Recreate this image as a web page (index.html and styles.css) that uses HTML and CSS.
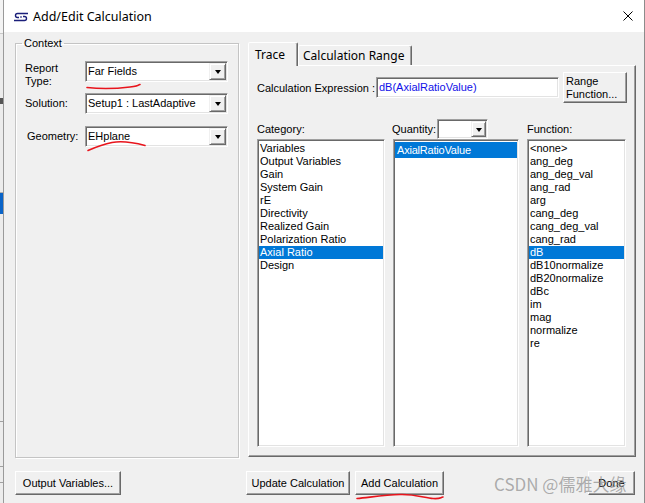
FILE: index.html
```html
<!DOCTYPE html>
<html>
<head>
<meta charset="utf-8">
<link rel="stylesheet" href="styles.css">
</head>
<body>
<div class="desk">
  <div class="strip">
    <div class="s-top"></div>
    <div class="s-a"></div>
    <div class="s-mark"></div>
    <div class="s-b"></div>
    <div class="s-blue"></div>
    <div class="s-c"></div>
    <div class="s-d"></div>
    <div class="s-e"></div>
  </div>
  <div class="window">
    <div class="titlebar">
      <svg class="appicon" width="16" height="10" viewBox="0 0 16 10">
        <path d="M15 1.5H4.5a2 2 0 0 0 0 4H6" fill="none" stroke="#1b1f7a" stroke-width="1.4"/>
        <path d="M1 8.5h10.5a2 2 0 0 0 0-4H10" fill="none" stroke="#1b1f7a" stroke-width="1.4"/>
        <path d="M7.3 5h1.4" stroke="#1b1f7a" stroke-width="1.4"/>
      </svg>
      <span class="title">Add/Edit Calculation</span>
      <svg class="close" width="10" height="10" viewBox="0 0 10 10">
        <path d="M0.5 0.5L9.5 9.5M9.5 0.5L0.5 9.5" stroke="#000" stroke-width="1"/>
      </svg>
    </div>
    <div class="client">
      <div class="columns">
        <fieldset class="group">
          <legend class="legend">Context</legend>
          <div class="frow first">
            <div class="flabel">Report<br>Type:</div>
            <div class="combo"><span class="val">Far Fields</span><span class="ddbtn"><i class="arrow"></i></span></div>
          </div>
          <div class="frow mid">
            <div class="flabel">Solution:</div>
            <div class="combo"><span class="val">Setup1 : LastAdaptive</span><span class="ddbtn"><i class="arrow"></i></span></div>
          </div>
          <div class="frow geo">
            <div class="flabel geolabel">Geometry:</div>
            <div class="combo"><span class="val">EHplane</span><span class="ddbtn"><i class="arrow"></i></span></div>
          </div>
        </fieldset>
        <div class="tabs">
          <div class="tabstrip">
            <div class="tab sel">Trace</div>
            <div class="tab other">Calculation Range</div>
          </div>
          <div class="panel">
            <div class="exprrow">
              <div class="exprlabel">Calculation Expression :</div>
              <div class="exprbox">dB(AxialRatioValue)</div>
              <div class="btn rangebtn">Range<br>Function...</div>
            </div>
            <div class="lists">
              <div class="lbl">Category:</div>
              <div class="lbl qcell"><span class="qlabel">Quantity:</span><div class="combo qcombo"><span class="val"></span><span class="ddbtn small"><i class="arrow"></i></span></div></div>
              <div class="lbl">Function:</div>
              <div class="list">
                <div class="item">Variables</div>
                <div class="item">Output Variables</div>
                <div class="item">Gain</div>
                <div class="item">System Gain</div>
                <div class="item">rE</div>
                <div class="item">Directivity</div>
                <div class="item">Realized Gain</div>
                <div class="item">Polarization Ratio</div>
                <div class="item on">Axial Ratio</div>
                <div class="item">Design</div>
              </div>
              <div class="list">
                <div class="item qitem on">AxialRatioValue</div>
              </div>
              <div class="list">
                <div class="item">&lt;none&gt;</div>
                <div class="item">ang_deg</div>
                <div class="item">ang_deg_val</div>
                <div class="item">ang_rad</div>
                <div class="item">arg</div>
                <div class="item">cang_deg</div>
                <div class="item">cang_deg_val</div>
                <div class="item">cang_rad</div>
                <div class="item on">dB</div>
                <div class="item">dB10normalize</div>
                <div class="item">dB20normalize</div>
                <div class="item">dBc</div>
                <div class="item">im</div>
                <div class="item">mag</div>
                <div class="item">normalize</div>
                <div class="item">re</div>
              </div>
            </div>
          </div>
        </div>
      </div>
      <div class="buttons">
        <div class="btn b-out">Output Variables...</div>
        <div class="btn b-upd">Update Calculation</div>
        <div class="btn b-add">Add Calculation</div>
        <div class="btn b-done">Done</div>
      </div>
    </div>
  </div>
</div>
<svg class="marks" width="645" height="503" viewBox="0 0 645 503">
  <path d="M87 87.5C100 89 118 88.5 130 87S137 85 140 84.5" fill="none" stroke="#e8141c" stroke-width="1.6" stroke-linecap="round"/>
  <path d="M88 150.5C96 147 104 144 112 142.5C120 141 130 141.5 145 145.5" fill="none" stroke="#e8141c" stroke-width="1.6" stroke-linecap="round"/>
  <path d="M357 498.5C372 497 385 495 400 494.5C415 494 425 498 433 498.5S440 497.5 443 497" fill="none" stroke="#e8141c" stroke-width="1.6" stroke-linecap="round"/>
</svg>
<div class="watermark">CSDN @儒雅大缘</div>
</body>
</html>
```
FILE: styles.css
```css
html, body {
  margin: 0;
  padding: 0;
}
body {
  width: 645px;
  height: 503px;
  overflow: hidden;
  position: relative;
  background: #f0f0f0;
  font-family: "Liberation Sans", Arial, sans-serif;
  font-size: 11px;
  color: #000;
}
.desk {
  display: flex;
  height: 503px;
}
.strip {
  width: 3px;
  display: flex;
  flex-direction: column;
  background: #ececec;
}
.s-top { height: 33px; background: #f4f4f4; border-bottom: 1px solid #c8c8c8; }
.s-a { height: 64px; }
.s-mark { height: 6px; background: #555; }
.s-b { height: 88px; border-bottom: 1px solid #b0b0b0; }
.s-blue { height: 21px; background: #0a64c8; }
.s-c { height: 207px; border-bottom: 1px solid #a0a0a0; }
.s-d { height: 44px; border-bottom: 1px solid #a0a0a0; }
.s-e { height: 15px; border-bottom: 1px solid #a0a0a0; }

.window {
  width: 640px;
  border-left: 1px solid #9a9a9a;
  border-right: 1px solid #8c8c8c;
  display: flex;
  flex-direction: column;
}
.titlebar {
  height: 32px;
  flex: none;
  background: #fff;
  display: flex;
  align-items: center;
  padding-left: 9px;
}
.appicon {
  margin-right: 4px;
  margin-top: 1px;
}
.title {
  flex: 1;
  font-family: "Noto Sans", sans-serif;
  font-size: 12.5px;
  color: #000;
}
.close {
  margin-right: 11px;
}
.client {
  flex: 1;
  background: #f0f0f0;
  padding: 5px 7px 0 11px;
}
.columns {
  display: grid;
  grid-template-columns: 224px 388px;
  column-gap: 9px;
  align-items: start;
}

/* Context group */
.group {
  margin: 0;
  box-sizing: border-box;
  height: 421px;
  border: 1px solid #c4c4c4;
  box-shadow: inset 1px 1px #fff, 1px 1px #fff;
  padding: 11px 0 0 9px;
  min-width: 0;
}
.legend {
  padding: 0 2px;
  margin-left: -3px;
  line-height: 13px;
  font-size: 11px;
}
.frow {
  display: flex;
  align-items: center;
}
.frow.first {
  align-items: flex-start;
  line-height: 13px;
}
.frow.first .flabel {
  margin-top: 1px;
}
.frow.mid {
  margin-top: 5px;
}
.frow.geo {
  margin-top: 12px;
}
.flabel {
  width: 60px;
  line-height: 13px;
}
.geolabel {
  padding-left: 2px;
  width: 58px;
}
.combo {
  width: 143px;
  height: 21px;
  box-sizing: border-box;
  border: 1px solid;
  border-color: #a0a0a0 #fff #fff #a0a0a0;
  box-shadow: inset 1px 1px #696969, inset -1px -1px #e3e3e3;
  background: #fff;
  padding: 1px;
  display: flex;
}
.val {
  flex: 1;
  padding-left: 1px;
  line-height: 17px;
  white-space: nowrap;
  overflow: hidden;
}
.ddbtn {
  width: 17px;
  box-sizing: border-box;
  background: #f0f0f0;
  border: 1px solid;
  border-color: #f0f0f0 #696969 #696969 #f0f0f0;
  box-shadow: inset 1px 1px #fff, inset -1px -1px #a0a0a0;
  display: flex;
  align-items: center;
  justify-content: center;
}
.ddbtn.small {
  width: 15px;
}
.arrow {
  width: 0;
  height: 0;
  border-left: 3.5px solid transparent;
  border-right: 3.5px solid transparent;
  border-top: 4px solid #000;
  margin-top: 1px;
}

/* Tabs */
.tabs {
  margin-top: 5px;
}
.tabstrip {
  height: 23px;
  display: flex;
  align-items: flex-end;
}
.tab {
  box-sizing: border-box;
  border: 1px solid;
  border-bottom: none;
  border-color: #fff #696969 transparent #fff;
  box-shadow: inset -1px 0 #a0a0a0;
  border-radius: 2px 2px 0 0;
  background: #f0f0f0;
  font-family: "Noto Sans", sans-serif;
  font-size: 12px;
  display: flex;
  align-items: center;
  white-space: nowrap;
}
.tab.sel {
  width: 50px;
  height: 24px;
  margin-bottom: -1px;
  padding-left: 6px;
  position: relative;
  z-index: 1;
  padding-bottom: 1px;
}
.tab.other {
  width: 114px;
  height: 20px;
  padding-left: 4px;
}
.panel {
  height: 392px;
  box-sizing: border-box;
  border: 1px solid;
  border-color: #fff #696969 #696969 #fff;
  box-shadow: inset -1px -1px #a0a0a0;
  padding: 6px 0 0 8px;
}
.exprrow {
  display: flex;
  align-items: center;
  height: 31px;
}
.exprlabel {
  width: 119px;
  white-space: nowrap;
}
.exprbox {
  width: 183px;
  height: 21px;
  box-sizing: border-box;
  border: 1px solid;
  border-color: #a0a0a0 #fff #fff #a0a0a0;
  box-shadow: inset 1px 1px #696969, inset -1px -1px #e3e3e3;
  background: #fff;
  color: #1010e8;
  padding-left: 2px;
  line-height: 19px;
  margin-right: 4px;
}
.btn {
  box-sizing: border-box;
  background: #f0f0f0;
  border: 1px solid;
  border-color: #fff #696969 #696969 #fff;
  box-shadow: inset -1px -1px #a0a0a0;
  display: flex;
  align-items: center;
  justify-content: center;
  white-space: nowrap;
}
.rangebtn {
  width: 64px;
  height: 31px;
  line-height: 13px;
  justify-content: flex-start;
  padding-left: 2px;
}
.lists {
  margin-top: 16px;
  display: grid;
  grid-template-columns: 128px 126px 99px;
  grid-template-rows: 20px 308px;
  column-gap: 8px;
}
.lbl {
  display: flex;
  align-items: center;
}
.qcell {
  margin-left: -1px;
}
.qlabel {
  width: 45px;
}
.qcombo {
  width: 51px;
  height: 20px;
}
.list {
  box-sizing: border-box;
  border: 1px solid;
  border-color: #a0a0a0 #fff #fff #a0a0a0;
  box-shadow: inset 1px 1px #696969, inset -1px -1px #e3e3e3;
  background: #fff;
  padding: 2px 1px 1px 1px;
  overflow: hidden;
}
.item {
  line-height: 13px;
  padding-left: 1px;
  white-space: nowrap;
}
.item.on {
  background: #0078d7;
  color: #fff;
}
.qitem {
  line-height: 16px;
  padding-left: 2px;
  letter-spacing: -0.2px;
}

/* Bottom buttons */
.buttons {
  margin-top: 13px;
  display: flex;
  height: 24px;
}
.b-out { width: 106px; }
.b-upd { width: 104px; margin-left: 125px; }
.b-add { width: 89px; margin-left: 5px; }
.b-done { width: 47px; margin-left: 144px; }

.marks {
  position: absolute;
  left: 0;
  top: 0;
  pointer-events: none;
}
.watermark {
  position: absolute;
  left: 494px;
  top: 473px;
  font-family: "Noto Sans CJK SC", "Noto Sans", sans-serif;
  font-size: 17px;
  line-height: 22px;
  color: rgba(140, 140, 140, 0.7);
  white-space: nowrap;
  pointer-events: none;
}
```
